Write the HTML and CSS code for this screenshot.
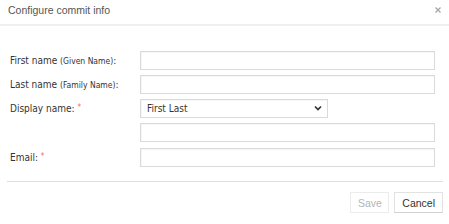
FILE: index.html
```html
<!DOCTYPE html>
<html lang="en">
  <head>
    <meta charset="UTF-8" />
    <title>Configure commit info</title>
    <link rel="stylesheet" href="styles.css">
  </head>
  <body>
    <div class="dialog">
      <div class="dialog-header">
        <span class="dialog-title">Configure commit info</span>
        <svg class="close" width="6" height="6" viewBox="0 0 6 6">
          <path d="M0.5 0.5 L5.5 5.5 M5.5 0.5 L0.5 5.5" stroke="#a8a8a8" stroke-width="1.4" fill="none" />
        </svg>
      </div>

      <div class="form">
        <label class="field-label">First name <small>(Given Name)</small>:</label>
        <input class="text-input" type="text">

        <label class="field-label">Last name <small>(Family Name)</small>:</label>
        <input class="text-input" type="text">

        <label class="field-label">Display name: <span class="req">*</span></label>
        <div class="select-wrap">
          <select class="select-input">
            <option>First Last</option>
          </select>
          <svg class="chevron" width="8" height="6" viewBox="0 0 8 6">
            <path d="M1 1.5 L4 4.5 L7 1.5" stroke="#333" stroke-width="1.7" fill="none" />
          </svg>
        </div>

        <span></span>
        <input class="text-input" type="text">

        <label class="field-label email">Email: <span class="req">*</span></label>
        <input class="text-input email" type="text">
      </div>

      <div class="dialog-footer">
        <button class="btn btn-disabled">Save</button>
        <button class="btn">Cancel</button>
      </div>
    </div>
  </body>
</html>
```

FILE: styles.css
```css
 /* --------------------
 commit info dialog
 -------------------- */
 body {
   margin: 0;
   background-color: #fff;
 }

 .dialog {
   width: 449px;
   height: 224px;
   background-color: #fff;
 }

 .dialog-header {
   height: 24px;
   border-bottom: 2px solid #efefef;
   display: flex;
   align-items: center;
   justify-content: space-between;
   padding: 0 8px 0 8px;
 }

 .dialog-title {
   font-family: "Liberation Sans", Arial, sans-serif;
   font-size: 10.5px;
   color: #555;
   margin-top: -4px;
 }

 .close {
   margin-top: -4px;
 }

 .form {
   display: grid;
   grid-template-columns: 130px 1fr;
   row-gap: 5px;
   align-items: center;
   padding: 25px 14px 0 10px;
   font-family: "DejaVu Sans Condensed", "DejaVu Sans", Verdana, sans-serif;
   font-stretch: condensed;
   font-size: 10px;
   color: #333;
 }

 .field-label small {
   font-size: 8.5px;
 }

 .req {
   color: #e66;
   font-size: 8px;
   vertical-align: 2px;
 }

 .text-input,
 .select-input {
   box-sizing: border-box;
   height: 19px;
   margin: 0;
   border: 1px solid #dadada;
   box-shadow: inset 1px 1px 1px rgba(0, 0, 0, 0.04);
   background-color: #fff;
   font: inherit;
   color: #333;
   outline: none;
 }

 .text-input {
   width: 100%;
 }

 .email {
   margin-top: 1px;
 }

 .select-wrap {
   position: relative;
   width: 188px;
   height: 19px;
 }

 .select-input {
   width: 188px;
   -webkit-appearance: none;
   appearance: none;
   padding: 0 0 0 6px;
   border-radius: 0;
 }

 .chevron {
   position: absolute;
   right: 6px;
   top: 6px;
   pointer-events: none;
 }

 .dialog-footer {
   margin: 14px 6px 0 7px;
   padding-top: 10px;
   border-top: 1px solid #dedede;
   display: flex;
   justify-content: flex-end;
   gap: 5px;
 }

 .btn {
   height: 21px;
   padding: 0 7px;
   border: 1px solid #e2e2e2;
   border-bottom-color: #d2d2d2;
   background-color: #fff;
   font-family: "Liberation Sans", Arial, sans-serif;
   font-size: 10.5px;
   color: #333;
 }

 .btn-disabled {
   color: #b5b5b5;
   border-color: #ececec;
   padding: 0 6.5px;
 }
```
